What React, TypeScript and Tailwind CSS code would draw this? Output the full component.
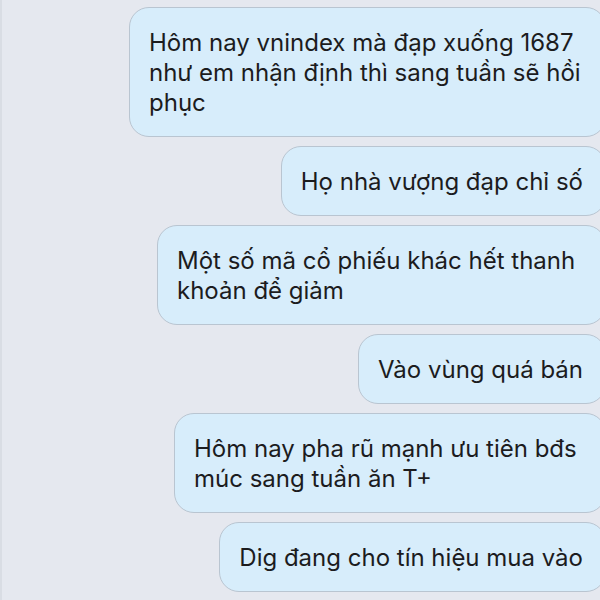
import React from 'react'

const messages = [
  { text: 'Hôm nay vnindex mà đạp xuống 1687 như em nhận định thì sang tuần sẽ hồi phục', width: 'w-[477px]' },
  { text: 'Họ nhà vượng đạp chỉ số', width: '' },
  { text: 'Một số mã cổ phiếu khác hết thanh khoản để giảm', width: 'w-[449px]' },
  { text: 'Vào vùng quá bán', width: '' },
  { text: 'Hôm nay pha rũ mạnh ưu tiên bđs múc sang tuần ăn T+', width: 'w-[432px]' },
  { text: 'Dig đang cho tín hiệu mua vào', width: '' },
  { text: 'Cuối tuần', width: 'w-[451px]' }
]

const App: React.FC = () => {
  return (
    <div className="w-[600px] h-[600px] overflow-hidden bg-[#e5e8ef] border-l-2 border-[#d9dde4]">
      <div className="flex flex-col items-end gap-[9px] pt-[7px] mr-[-6px] font-['Inter','Noto_Sans',sans-serif] text-[24px] leading-[30px] text-[#1c1c1e]">
        {messages.map((m, i) => (
          <div
            key={i}
            className={`${m.width} rounded-[20px] border-[1.5px] border-[#b9c5d1] bg-[#d7edfb] pl-[19px] pr-[22px] pt-[20px] pb-[18px]`}
          >
            {m.text}
          </div>
        ))}
      </div>
    </div>
  )
}

export default App
